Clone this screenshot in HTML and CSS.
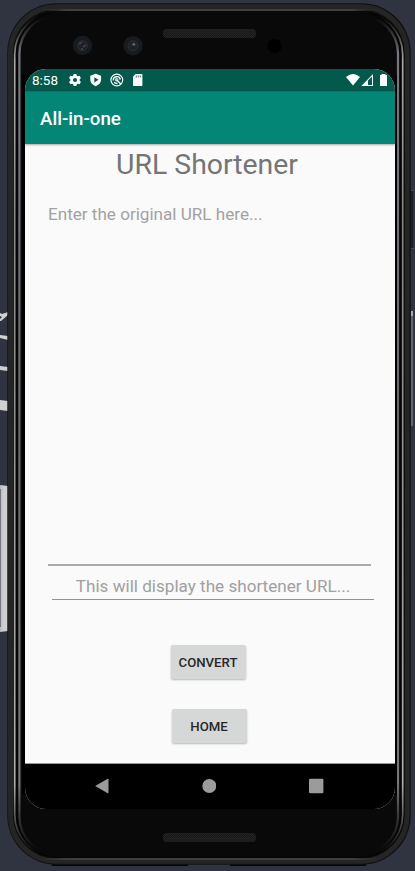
FILE: index.html
```html
<!DOCTYPE html>
<html lang="en">
<head>
<meta charset="utf-8">
<title>All-in-one</title>
<link rel="stylesheet" href="styles.css">
</head>
<body>
<svg class="frame" viewBox="0 0 415 871" aria-hidden="true">
  <defs>
    <linearGradient id="rimFade" x1="0" y1="0" x2="0" y2="871" gradientUnits="userSpaceOnUse">
      <stop offset=".018" stop-color="#999" stop-opacity="0"/><stop offset=".07" stop-color="#aaa"/>
      <stop offset=".25" stop-color="#858585"/><stop offset=".5" stop-color="#909090"/><stop offset=".9" stop-color="#b0b0b0"/>
      <stop offset=".98" stop-color="#999" stop-opacity="0"/>
    </linearGradient>
    <linearGradient id="innerFade" x1="0" y1="0" x2="0" y2="871" gradientUnits="userSpaceOnUse">
      <stop offset=".02" stop-color="#555" stop-opacity="0"/><stop offset=".06" stop-color="#777780"/>
      <stop offset=".5" stop-color="#66686c"/><stop offset=".9" stop-color="#777"/>
      <stop offset=".977" stop-color="#555" stop-opacity="0"/>
    </linearGradient>
    <linearGradient id="edge" x1="40" x2="378" y1="0" y2="0" gradientUnits="userSpaceOnUse"><stop stop-color="#404040" stop-opacity="0"/><stop offset=".08" stop-color="#404040"/><stop offset=".92" stop-color="#404040"/><stop offset="1" stop-color="#404040" stop-opacity="0"/></linearGradient>
    <linearGradient id="panel" x1="0" x2="1"><stop stop-color="#b5b6ba"/><stop offset=".4" stop-color="#cecece"/><stop offset="1" stop-color="#d0d0d0"/></linearGradient>
    <pattern id="mesh" width="2" height="2" patternUnits="userSpaceOnUse"><rect width="2" height="2" fill="#171717"/><path d="M0 0h1v1H0zM1 1h1v1H1z" fill="#242424"/></pattern>
  </defs>
  <g fill="#d0d0d0">
    <path d="M0 313l2 1 6-2v3l-7 6H0v-2l2-2-2-1z"/>
    <path d="M0 335l8 1v4l-8-2zM0 366l8 1v4l-8-1zM0 400l8 1v10l-8-1z"/>
  </g>
  <path d="M0 485l8 1v145l-8 1z" fill="url(#panel)"/>
  <path d="M0 489h1v138H0z" fill="#747780"/>
  <path d="M410 190h3v59h-3z" fill="#1f2024"/><path d="M411 190h3v1h-3zM411 248h3v1h-3z" fill="#494b54"/>
  <path d="M410 310h3q1 0 1 3v114h-4z" fill="#36373d"/><path d="M411 311h2v115h-2z" fill="#626469"/><path d="M411 311h2v5h-2z" fill="#aaa"/>
  <path d="M52 864h136v2H52zM230 864h136v2H230z" fill="#080808"/>
  <rect x="7.3" y="3.2" width="403.4" height="861.5" rx="49" fill="#101010"/>
  <rect x="10.5" y="6.7" width="396.5" height="854.5" rx="46" fill="none" stroke="#252525" stroke-width="5"/>
  <rect x="13.5" y="11" width="391" height="847" rx="43" fill="#050505"/>
  <rect x="40" y="9" width="338" height="2" fill="url(#edge)"/>
  <rect x="40" y="858" width="338" height="2" fill="url(#edge)"/>
  <rect x="14.7" y="11.5" width="388" height="846" rx="43" fill="none" stroke="url(#rimFade)" stroke-width="1.7"/>
  <rect x="17.7" y="13" width="382" height="844" rx="40" fill="#090909"/>
  <rect x="50" y="11" width="318" height="5" fill="#090909"/>
  <rect x="19.4" y="15.5" width="378.6" height="839" rx="38" fill="none" stroke="url(#innerFade)" stroke-width="2.2"/>
  <path d="M22 75h3v720h-3zM395 75h2v720h-2z" fill="#000"/>
  <rect x="163" y="29" width="93" height="9" rx="3.5" fill="url(#mesh)"/>
  <rect x="163" y="833" width="93" height="9" rx="3.5" fill="url(#mesh)"/>
  <g fill="#161b20"><circle cx="82.5" cy="45.5" r="9.7"/><circle cx="133" cy="45.7" r="9.7"/></g>
  <g fill="#202124" stroke="#2d2f33"><circle cx="82.5" cy="45.7" r="5"/><circle cx="133" cy="45.7" r="5"/></g>
  <path d="M79 44l3-2M83 47l3-2M81 49h2" stroke="#55585e"/><circle cx="133.8" cy="44.3" r="1.5" fill="#5e6166"/>
  <circle cx="274.5" cy="46" r="7" fill="#000"/>
</svg>
<main class="screen">
  <header class="status">
    <span class="clock">8:58</span>
    <svg class="notices" width="76" height="14" viewBox="0 0 76 14">
      <g fill="#fff">
        <path fill-rule="evenodd" d="M5.6 1h2.8l.4 1.7 1 .6 1.7-.6 1.4 2.4-1.3 1.3v1.2l1.3 1.3-1.4 2.4-1.7-.6-1 .6-.4 1.7H5.6l-.4-1.7-1-.6-1.7.6-1.4-2.4 1.3-1.3V6.4L1.1 5.1l1.4-2.4 1.7.6 1-.6zM7 4.9a2.1 2.1 0 1 0 0 4.2 2.1 2.1 0 0 0 0-4.2z"/>
        <path fill-rule="evenodd" d="M27.7.7l5.4 2v4.100c0 3-2.200 5.200-5.400 6.500-3.200-1.300-5.400-3.500-5.400-6.500V2.700zM26.300 4.200v5.200L30.600 6.800z"/>
        <path d="M65 3.800L67.600 1h6.100q.7 0 .7.700v10.600q0 .7-.7.700h-8q-.7 0-.7-.7z"/>
      </g>
      <g fill="none" stroke="#fff"><circle cx="48.800" cy="7" r="5.900" stroke-width="1.200"/><path d="M45.200 7.500A3.600 3.600 0 0 1 52.300 6.500M46 9.200Q47.500 10.600 49.500 10.500M48.300 6.500l4.700 4.700" stroke-width="1.300"/><circle cx="48.600" cy="6.700" r="1.300"/></g>
      <path d="M68.300 2.500v2M70.300 2.500v2M72.300 2.500v2" stroke="#035a4b" stroke-width=".8"/>
    </svg>
    <svg class="signals" width="44" height="14" viewBox="0 0 44 14">
      <path fill="#fff" d="M0 4Q7-1.800 14 4L7 12.500z"/>
      <path fill="#fff" d="M15.300 13L27 1v12zM22 7.500V12h4V3.500z" fill-rule="evenodd"/>
      <path fill="#fff" d="M35.500 1h4v1H41v11h-7V2h1.500z"/>
    </svg>
  </header>
  <div class="appbar"><h1>All-in-one</h1></div>
  <section class="content">
    <h2>URL Shortener</h2>
    <div class="original">Enter the original URL here...</div>
    <div class="result">This will display the shortener URL...</div>
    <button class="convert">CONVERT</button>
    <button class="home">HOME</button>
  </section>
  <nav class="navigation">
    <svg width="14" height="16" viewBox="0 0 14 16"><path d="M.2 8L12.700.8q.8-.4.800.5v13.400q0 .9-.8.500z"/></svg>
    <svg width="14" height="16" viewBox="0 0 14 16"><circle cx="7.300" cy="8" r="7"/></svg>
    <svg width="15" height="16" viewBox="0 0 15 16"><rect x="0" y=".8" width="14.400" height="14.400" rx="1.200"/></svg>
  </nav>
</main>
</body>
</html>
```
FILE: styles.css
```css
* { box-sizing: border-box; }
html, body { margin: 0; width: 415px; height: 871px; overflow: hidden; }
body { background: #303440; padding: 69px 20px 62px 25px; font-family: Roboto, sans-serif; position: relative; }
.frame { position: absolute; left: 0; top: 0; width: 415px; height: 871px; }
.screen { position: relative; display: flex; flex-direction: column; width: 370px; height: 740px; border-radius: 21px; overflow: hidden; background: #fafafa; }
.status { height: 22px; flex: none; display: flex; align-items: center; padding: 0 5px 0 7px; background: #03594b; color: #fff; }
.clock { width: 36px; font-size: 13.5px; line-height: 22px; white-space: nowrap; }
.signals { margin-left: auto; }
.appbar { height: 53px; flex: none; background: #038676; padding-left: 15px; box-shadow: 0 1px 2px #0005; position: relative; border-top: 1px solid #037767; }
h1 { margin: 0; color: #fff; font-size: 18.7px; line-height: 55px; height: 52px; font-weight: 500; }
.content { flex: 1; display: flex; flex-direction: column; align-items: center; border-bottom: 1px solid #999; }
h2 { margin: 2px 0 0; font-size: 28.4px; line-height: 37px; height: 36px; font-weight: 400; color: #757575; padding-right: 6px; }
.original { align-self: flex-start; width: 323px; height: 363px; margin: 21px 0 0 23px; border-bottom: 2px solid #aaa; font-size: 17.1px; line-height: 22px; color: #a2a2a2; }
.result { align-self: flex-start; width: 322px; height: 25px; margin: 9px 0 0 27px; border-bottom: 1px solid #929292; font-size: 17.1px; line-height: 22px; text-align: center; color: #a0a0a0; }
button { width: 75px; height: 34px; flex: none; padding: 1px 0 0; border: 0; border-radius: 2px; background: #d6d7d7; box-shadow: 0 1px 2px #0004; font: 500 13.2px/34px Roboto, sans-serif; color: #282828; }
.convert { margin: 45px 4px 0 0; }
.home { margin: 30px 2px 0 0; }
.navigation { height: 45px; flex: none; display: flex; align-items: center; justify-content: space-between; padding: 0 71px 2px 70px; background: #000; fill: #9b9b9b; }
```
